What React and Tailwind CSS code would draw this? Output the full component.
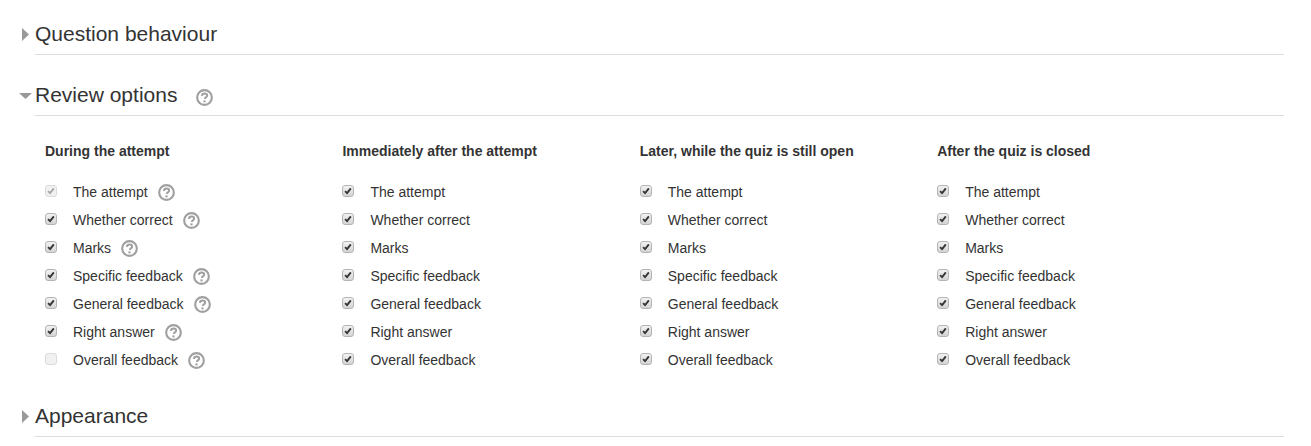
const options = [
  "The attempt",
  "Whether correct",
  "Marks",
  "Specific feedback",
  "General feedback",
  "Right answer",
  "Overall feedback",
];

const columns = [
  { title: "During the attempt", help: true },
  { title: "Immediately after the attempt" },
  { title: "Later, while the quiz is still open" },
  { title: "After the quiz is closed" },
];

const HelpIcon = ({ className }) => (
  <svg viewBox="0 0 16 16" className={"h-[17px] w-[17px] shrink-0 " + className}>
    <circle cx="8" cy="8" r="6.9" fill="none" stroke="#a0a0a0" strokeWidth="2" />
    <path
      d="M5.5 6.5c.1-1.5 1.1-2.3 2.6-2.3 1.4 0 2.4.8 2.4 1.9 0 1-.6 1.4-1.2 1.8-.6.4-.9.7-.9 1.4v.2"
      fill="none"
      stroke="#a0a0a0"
      strokeWidth="1.9"
    />
    <rect x="7" y="10.7" width="2" height="1.9" fill="#a0a0a0" />
  </svg>
);

const Checkbox = ({ checked, disabled }) => (
  <span
    className={
      "mt-[-2px] flex h-3 w-3 shrink-0 items-center justify-center rounded-[3px] border " +
      (disabled
        ? "border-[#dadada] bg-[#f1f1f1]"
        : "border-[#b4b4b4] bg-gradient-to-b from-[#f2f2f2] to-[#d4d4d4]")
    }
  >
    {checked && (
      <svg viewBox="0 0 12 12" className="h-3 w-3">
        <path
          d="M2.5 6.2 4.9 8.6 9.4 2.8"
          fill="none"
          stroke={disabled ? "#a8a8a8" : "#333"}
          strokeWidth="2.2"
        />
      </svg>
    )}
  </span>
);

const Section = ({ open, title, help }) => (
  <div className="flex h-[35px] items-start">
    <div className="flex h-[28px] w-[35px] shrink-0 items-center justify-end pr-[3px]">
      {open ? (
        <svg viewBox="0 0 13 6" className="mt-[1px] h-[6px] w-[13px]">
          <path d="M0 0h13L6.5 6z" fill="#999" />
        </svg>
      ) : (
        <svg viewBox="0 0 7 13" className="mr-[3px] h-[13px] w-[7px]">
          <path d="M0 0l7 6.5L0 13z" fill="#999" />
        </svg>
      )}
    </div>
    <div className="flex h-[35px] flex-1 items-start border-b border-[#dddddd]">
      <h3 className="text-[21px] leading-[28px] text-[#333333]">{title}</h3>
      {help && <HelpIcon className="ml-[19px] mt-[8px]" />}
    </div>
  </div>
);

export default function App() {
  return (
    <div className="h-[446px] overflow-hidden bg-white pr-[27px] pt-[20px] font-['Liberation_Sans',Arial,sans-serif] text-[14px] text-[#333333]">
      <Section title="Question behaviour" />
      <div className="mt-[26px]">
        <Section open title="Review options" help />
      </div>
      <div className="grid grid-cols-[297.4px_297.4px_297.4px_297.4px] pl-[45px] pt-[25px]">
        {columns.map((col) => (
          <div key={col.title}>
            <div className="h-[20px] font-bold leading-[20px]">{col.title}</div>
            <div className="mt-[17px]">
              {options.map((name, i) => (
                <div key={name} className="flex h-[28px] items-center">
                  <Checkbox
                    checked={!(col.help && i === 6)}
                    disabled={col.help && (i === 0 || i === 6)}
                  />
                  <span className="ml-[16px] leading-[20px]">{name}</span>
                  {col.help && <HelpIcon className="ml-[10px]" />}
                </div>
              ))}
            </div>
          </div>
        ))}
      </div>
      <div className="mt-[28px]">
        <Section title="Appearance" />
      </div>
    </div>
  );
}
